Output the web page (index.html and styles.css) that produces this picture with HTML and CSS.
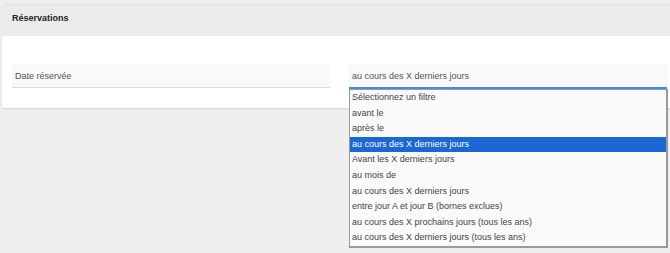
FILE: index.html
```html
<!DOCTYPE html>
<html lang="fr">
<head>
    <meta charset="UTF-8">
    <title>Réservations</title>
    <link rel="stylesheet" href="styles.css">
</head>
<body>
    <div class="card">
        <div class="card-header">Réservations</div>
        <div class="card-body">
            <div class="filter-row">
                <div class="field">Date réservée</div>
                <div class="select-wrap">
                    <div class="field field-active">au cours des X derniers jours</div>
                    <ul class="options">
                        <li>Sélectionnez un filtre</li>
                        <li>avant le</li>
                        <li>après le</li>
                        <li class="selected">au cours des X derniers jours</li>
                        <li>Avant les X derniers jours</li>
                        <li>au mois de</li>
                        <li>au cours des X derniers jours</li>
                        <li>entre jour A et jour B (bornes exclues)</li>
                        <li>au cours des X prochains jours (tous les ans)</li>
                        <li>au cours des X derniers jours (tous les ans)</li>
                    </ul>
                </div>
            </div>
        </div>
    </div>
</body>
</html>
```
FILE: styles.css
```css
* {
    box-sizing: border-box;
}

html, body {
    height: 100%;
}

body {
    margin: 0;
    padding: 4px 0 0 2px;
    background-color: #efefef;
    font-family: "Liberation Sans", Arial, sans-serif;
    font-size: 9px;
    overflow: hidden;
}

.card {
    margin-right: -8px;
    background-color: #fff;
    border-top: 1px solid #e2e2e2;
    border-radius: 3px;
    box-shadow: 0 1px 2px rgba(0, 0, 0, 0.12);
}

.card-header {
    height: 31px;
    padding: 8px 10px;
    background-color: #ebebeb;
    color: #222;
    font-weight: bold;
    line-height: 11px;
}

.card-body {
    padding: 28px 0 19px 10px;
}

.filter-row {
    display: grid;
    grid-template-columns: 318px 318px;
    column-gap: 19px;
}

.field {
    height: 24px;
    padding: 0 3px;
    background-color: #f9f9f9;
    border-bottom: 1px solid #dcdcdc;
    color: #555;
    line-height: 25px;
}

.select-wrap {
    position: relative;
}

.field-active {
    height: 25px;
    border-bottom: 2px solid #3d8ee8;
}

.options {
    position: absolute;
    top: 25px;
    left: 0;
    width: 319px;
    margin: 0;
    padding: 0;
    list-style: none;
    background-color: #fafafa;
    border: 1px solid #9a9a9a;
    border-right-width: 2px;
    border-bottom-width: 2px;
    color: #444;
}

.options li {
    height: 15.6px;
    padding: 0 2px;
    line-height: 15.6px;
    white-space: nowrap;
}

.options li.selected {
    background-color: #1b67d3;
    color: #fff;
}
```
